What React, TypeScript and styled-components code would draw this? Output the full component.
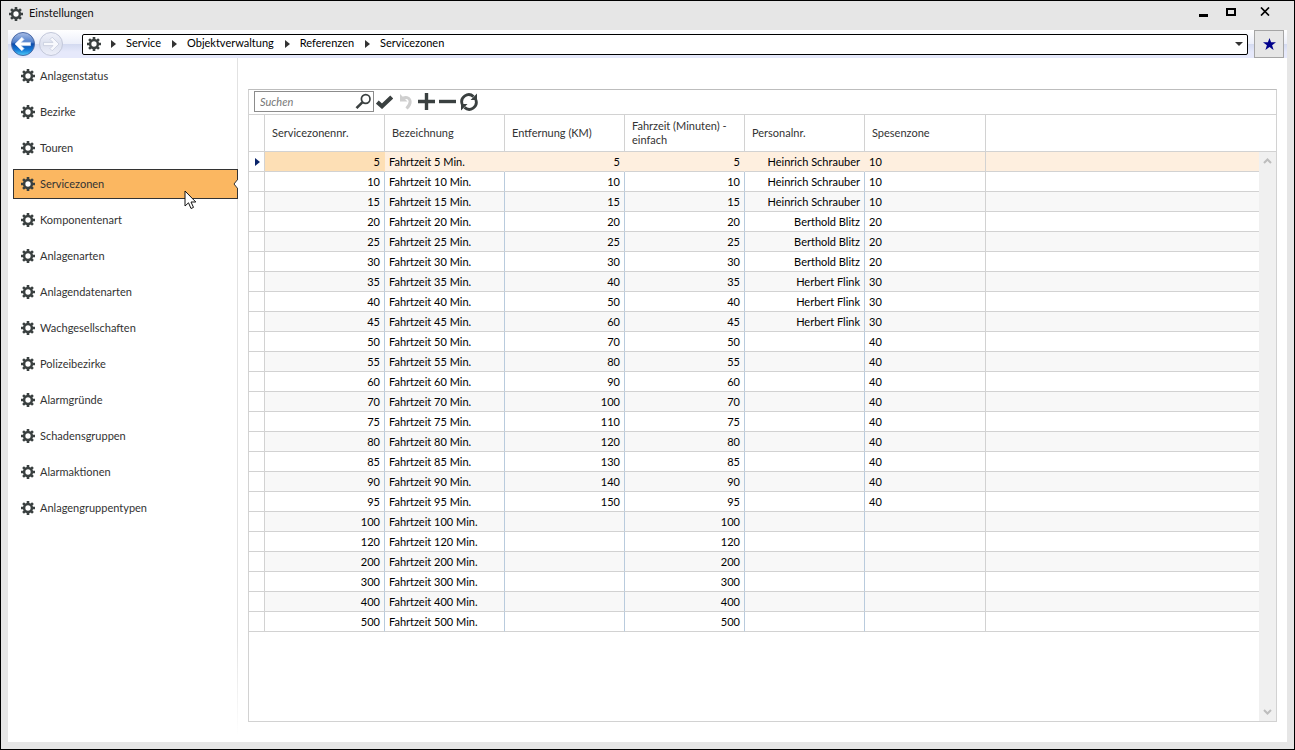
import React from "react";
import styled, { createGlobalStyle, css } from "styled-components";

const Global = createGlobalStyle`
  * { box-sizing: border-box; }
  body { margin: 0; font: 11px/14px Lato, "Open Sans", sans-serif; color: #333; background: #e6e6e6; }
  button, input { font: inherit; color: inherit; }
`;

const Window = styled.div`
  display: flex;
  flex-direction: column;
  min-height: 100vh;
  border: 1px solid #000;
  background: #e6e6e6;
  padding: 0 7px 7px;
`;

const TitleBar = styled.header`
  display: flex;
  align-items: center;
  gap: 6px;
  height: 29px;
  padding: 0 2px 4px 1px;
`;

const Title = styled.h1`
  flex: 1;
  margin: 0;
  padding-bottom: 2px;
  font: inherit;
  color: #111;
`;

const PlainButton = styled.button`
  display: flex;
  align-items: center;
  justify-content: center;
  border: 0;
  padding: 0;
  background: none;
`;

const WindowButton = styled(PlainButton)<{ $wide?: boolean }>`
  width: ${(p) => (p.$wide ? 40 : 28)}px;
  height: 22px;
  padding-bottom: 4px;
`;

const WindowButtons = styled.div`
  display: flex;
`;

const NavBar = styled.nav`
  display: flex;
  align-items: center;
  height: 28px;
  padding-right: 3px;
  background: linear-gradient(#fff 0, #eceffa 14px, #d3daf0 14px, #e6e9fb 22px, #e6e9fb 28px);
`;

const History = styled.div`
  display: flex;
  width: 74px;
  padding-left: 1px;
`;

const AddressBar = styled.div`
  display: flex;
  flex: 1;
  align-items: center;
  height: 21px;
  border: 1px solid #000;
  border-radius: 2px;
  background: #fff;
  padding: 0 4px;
`;

const Crumbs = styled.ol`
  display: flex;
  flex: 1;
  margin: 0;
  padding: 0;
  list-style: none;
`;

const Crumb = styled.li`
  display: flex;
  align-items: center;
`;

const CrumbLink = styled.a`
  color: #000;
  text-decoration: none;
  padding: 0 1px 2px 0;
`;

const CrumbArrow = styled.svg`
  margin: 0 10px;
`;

const StarButton = styled(PlainButton)`
  width: 30px;
  height: 28px;
  margin-left: 6px;
  border: 1px solid #a5a5a5;
  background: #e6e6e6;
`;

const Body = styled.div`
  display: flex;
  flex: 1;
  background: #fff;
`;

const Sidebar = styled.ul`
  flex: none;
  width: 230px;
  margin: 0;
  padding: 3px 0 0 5px;
  list-style: none;
  border-right: 1px solid;
  border-image: linear-gradient(#e2e2e2 85%, #fff 99%) 1;
`;

const SidebarItem = styled.li`
  height: 36px;
`;

const SidebarLink = styled.a<{ $active?: boolean }>`
  position: relative;
  display: flex;
  align-items: center;
  gap: 5px;
  height: 30px;
  padding-left: 7px;
  border: 1px solid transparent;
  color: #333;
  text-decoration: none;
  ${(p) =>
    p.$active &&
    css`
      margin-right: -1px;
      border-color: #333;
      background: #fbb761;
    `}
`;

const Notch = styled.svg`
  position: absolute;
  right: -1px;
  top: 9px;
`;

const Pointer = styled.svg`
  position: absolute;
  left: 170px;
  top: 20px;
`;

const Main = styled.main`
  display: flex;
  flex: 1;
  flex-direction: column;
  min-width: 0;
  margin: 31px 10px 20px;
  border: 1px solid #d2d2d2;
  border-top-color: #bdbdbd;
`;

const Toolbar = styled.div`
  display: flex;
  align-items: center;
  height: 25px;
  padding: 0 0 1px 5px;
  border-bottom: 1px solid #d2d2d2;
`;

const Search = styled.label`
  display: flex;
  align-items: center;
  width: 120px;
  height: 21px;
  border: 1px solid #8c8c8c;
  padding: 0 1px 0 5px;
`;

const SearchInput = styled.input`
  flex: 1;
  min-width: 0;
  border: 0;
  padding: 0;
  outline: 0;
  background: none;
  &::placeholder {
    color: #777;
    font-style: italic;
    opacity: 1;
  }
`;

const ToolButton = styled(PlainButton)`
  width: 21px;
  height: 21px;
`;

const GridArea = styled.div`
  position: relative;
  display: flex;
  flex: 1;
`;

const Grid = styled.table`
  width: 100%;
  align-self: flex-start;
  table-layout: fixed;
  border-collapse: separate;
  border-spacing: 0;
`;

const MarkerCol = styled.col`
  width: 16px;
`;

const DataCol = styled.col<{ $last?: boolean }>`
  width: ${(p) => (p.$last ? 121 : 120)}px;
`;

const HeadCell = styled.th`
  height: 37px;
  padding: 0 7px;
  font-weight: 400;
  text-align: left;
  border-right: 1px solid #d2d2d2;
  border-bottom: 1px solid #d2d2d2;
  &:last-child { border-right: 0; }
`;

const Row = styled.tr<{ $selected?: boolean }>`
  background: #fff;
  &:nth-child(odd) { background: #f8f8f8; }
  ${(p) => p.$selected && css`&&& { background: #feefdf; }`}
`;

const Cell = styled.td<{ $right?: boolean; $line?: string; $fill?: string }>`
  height: 20px;
  padding: 0 4px;
  color: #000;
  white-space: nowrap;
  text-align: ${(p) => (p.$right ? "right" : "left")};
  border-right: 1px solid ${(p) => p.$line ?? "#b9cbdd"};
  border-bottom: 1px solid #d2d2d2;
  background: ${(p) => p.$fill ?? "none"};
  &:last-child { border-right: 0; }
`;

const MarkerCell = styled(Cell)`
  padding: 0 6px;
  background: #fff;
  svg { display: block; }
`;

const ScrollBar = styled.div`
  position: absolute;
  top: 37px;
  right: 0;
  bottom: 0;
  display: flex;
  flex-direction: column;
  justify-content: space-between;
  width: 17px;
  background: #f0f0f0;
`;

const ScrollButton = styled(PlainButton)`
  height: 18px;
`;

const Gear = () => (
  <svg width="14" height="14" viewBox="0 0 14 14" aria-hidden="true">
    <circle cx="7" cy="7" r="3.5" fill="#fff" />
    <g fill="none" stroke="#3a4040">
      {[0, 45, 90, 135].map((a) => (
        <path key={a} d="M7 0V3M7 11V14" strokeWidth="2.6" transform={`rotate(${a} 7 7)`} />
      ))}
      <circle cx="7" cy="7" r="3.9" strokeWidth="2.5" />
    </g>
  </svg>
);

const HistoryArrow = ({ forward }: { forward?: boolean }) => (
  <svg width="28" height="28" viewBox="0 0 28 28" aria-hidden="true">
    <defs>
      <linearGradient id="ball" x1="0" y1="0" x2="0" y2="1">
        <stop offset="0" stopColor="#a9bde6" />
        <stop offset=".42" stopColor="#4f7fcb" />
        <stop offset=".5" stopColor="#0b4bab" />
        <stop offset=".75" stopColor="#1478d6" />
        <stop offset="1" stopColor="#4fd0fa" />
      </linearGradient>
      <linearGradient id="ballOff" x1="0" y1="0" x2="0" y2="1">
        <stop offset="0" stopColor="#f0f2fa" />
        <stop offset=".5" stopColor="#dde1ef" />
        <stop offset="1" stopColor="#eef0fa" />
      </linearGradient>
    </defs>
    <circle cx="14" cy="14" r="11.5" fill={forward ? "url(#ballOff)" : "url(#ball)"} stroke={forward ? "#c3c8da" : "#4a69a6"} />
    <path
      d="M6 14L12.8 7.2L15 9.4L12 12.4H21.5V15.6H12L15 18.6L12.8 20.8Z"
      fill={forward ? "#f8f9fd" : "#fff"}
      stroke={forward ? "#c3c8da" : "#d5e2f7"}
      strokeWidth=".7"
      strokeLinejoin="round"
      transform={forward ? "rotate(180 14 14)" : undefined}
    />
  </svg>
);

const menu = [
  "Anlagenstatus", "Bezirke", "Touren", "Servicezonen", "Komponentenart", "Anlagenarten", "Anlagendatenarten",
  "Wachgesellschaften", "Polizeibezirke", "Alarmgründe", "Schadensgruppen", "Alarmaktionen", "Anlagengruppentypen",
];
const crumbs = ["Service", "Objektverwaltung", "Referenzen", "Servicezonen"];
const headers = ["Servicezonennr.", "Bezeichnung", "Entfernung (KM)", "Fahrzeit (Minuten) - einfach", "Personalnr.", "Spesenzone"];

type Zone = [nr: number, km: number | "", person: string, expense: number | ""];
const zones: Zone[] = [
  [5, 5, "Heinrich Schrauber", 10], [10, 10, "Heinrich Schrauber", 10], [15, 15, "Heinrich Schrauber", 10],
  [20, 20, "Berthold Blitz", 20], [25, 25, "Berthold Blitz", 20], [30, 30, "Berthold Blitz", 20],
  [35, 40, "Herbert Flink", 30], [40, 50, "Herbert Flink", 30], [45, 60, "Herbert Flink", 30],
  [50, 70, "", 40], [55, 80, "", 40], [60, 90, "", 40], [70, 100, "", 40], [75, 110, "", 40],
  [80, 120, "", 40], [85, 130, "", 40], [90, 140, "", 40], [95, 150, "", 40],
  [100, "", "", ""], [120, "", "", ""], [200, "", "", ""], [300, "", "", ""], [400, "", "", ""], [500, "", "", ""],
];

export default function App() {
  return (
    <>
      <Global />
      <Window>
        <TitleBar>
          <Gear />
          <Title>Einstellungen</Title>
          <WindowButtons>
            <WindowButton aria-label="Minimieren">
              <svg width="9" height="10"><path d="M0 8.5H9" stroke="#000" strokeWidth="3" /></svg>
            </WindowButton>
            <WindowButton aria-label="Maximieren">
              <svg width="10" height="8"><path d="M1 1H9V7H1Z" fill="none" stroke="#000" strokeWidth="2" /></svg>
            </WindowButton>
            <WindowButton $wide aria-label="Schließen">
              <svg width="10" height="9"><path d="M1 .5L9 8.5M9 .5L1 8.5" stroke="#000" strokeWidth="1.7" /></svg>
            </WindowButton>
          </WindowButtons>
        </TitleBar>
        <NavBar aria-label="Navigation">
          <History>
            <PlainButton aria-label="Zurück"><HistoryArrow /></PlainButton>
            <PlainButton aria-label="Vorwärts" disabled><HistoryArrow forward /></PlainButton>
          </History>
          <AddressBar>
            <Gear />
            <Crumbs>
              {crumbs.map((c) => (
                <Crumb key={c}>
                  <CrumbArrow width="5" height="8"><path d="M0 0L5 4L0 8Z" fill="#333" /></CrumbArrow>
                  <CrumbLink href="#">{c}</CrumbLink>
                </Crumb>
              ))}
            </Crumbs>
            <PlainButton aria-label="Verlauf">
              <svg width="8" height="4"><path d="M0 0H8L4 4Z" fill="#333" /></svg>
            </PlainButton>
          </AddressBar>
          <StarButton aria-label="Favorit">
            <svg width="13" height="12" viewBox="0 0 13 12">
              <path d="M6.5 0L8.1 4.3H13L9.1 7.3L10.6 12L6.5 9.1L2.4 12L3.9 7.3L0 4.3H4.9Z" fill="#00008b" />
            </svg>
          </StarButton>
        </NavBar>
        <Body>
          <Sidebar>
            {menu.map((m) => {
              const active = m === "Servicezonen";
              return (
                <SidebarItem key={m}>
                  <SidebarLink href="#" $active={active}>
                    <Gear />
                    {m}
                    {active && (
                      <>
                        <Notch width="5" height="10"><path d="M5 0L1 5L5 10" fill="#fff" stroke="#333" /></Notch>
                        <Pointer width="13" height="20" viewBox="0 0 13 20">
                          <path d="M1 1V16L4.5 12.8L7 18.5L9.5 17.4L7 12H11.8Z" fill="#fff" stroke="#111" />
                        </Pointer>
                      </>
                    )}
                  </SidebarLink>
                </SidebarItem>
              );
            })}
          </Sidebar>
          <Main>
            <Toolbar>
              <Search>
                <SearchInput placeholder="Suchen" aria-label="Suchen" />
                <svg width="17" height="17" viewBox="0 0 17 17" fill="none" stroke="#3a4040">
                  <circle cx="10.7" cy="6" r="4.3" strokeWidth="1.7" />
                  <path d="M7.3 9.4L1.5 15.2" strokeWidth="2.6" />
                </svg>
              </Search>
              <ToolButton aria-label="Übernehmen">
                <svg width="17" height="14" viewBox="0 0 17 14"><path d="M1.3 7L6 11.2L15.7 2" fill="none" stroke="#3a4040" strokeWidth="4.2" /></svg>
              </ToolButton>
              <ToolButton aria-label="Rückgängig" disabled>
                <svg width="14" height="17" viewBox="0 0 14 17">
                  <path d="M4 5.2C10 2.5 14.5 8.5 7.5 15.5" fill="none" stroke="#cfcfcf" strokeWidth="3" />
                  <path d="M1 1V8.5H8.5Z" fill="#cfcfcf" />
                </svg>
              </ToolButton>
              <ToolButton aria-label="Hinzufügen">
                <svg width="17" height="17"><path d="M0 8.5H17M8.5 0V17" stroke="#3a4040" strokeWidth="3.4" /></svg>
              </ToolButton>
              <ToolButton aria-label="Entfernen">
                <svg width="17" height="17"><path d="M0 8.5H17" stroke="#3a4040" strokeWidth="3.4" /></svg>
              </ToolButton>
              <ToolButton aria-label="Aktualisieren">
                <svg width="18" height="18" viewBox="0 0 18 18" fill="none" stroke="#3a4040" strokeWidth="2.8">
                  <path d="M2.2 11.2A7 7 0 0 1 13.5 3.6M15.8 6.8A7 7 0 0 1 4.5 14.4" />
                  <path d="M17 .5V7H10.5ZM1 17.5V11H7.5Z" fill="#3a4040" stroke="none" />
                </svg>
              </ToolButton>
            </Toolbar>
            <GridArea>
              <Grid>
                <colgroup>
                  <MarkerCol />
                  {headers.map((h, i) => <DataCol key={h} $last={i === headers.length - 1} />)}
                  <col />
                </colgroup>
                <thead>
                  <tr>
                    <HeadCell />
                    {headers.map((h) => <HeadCell key={h} scope="col">{h}</HeadCell>)}
                    <HeadCell />
                  </tr>
                </thead>
                <tbody>
                  {zones.map(([nr, km, person, expense], i) => {
                    const sel = i === 0;
                    const line = sel ? "transparent" : undefined;
                    return (
                      <Row key={nr} $selected={sel}>
                        <MarkerCell $line="#d2d2d2">
                          {sel && <svg width="5" height="8"><path d="M0 0L5 4L0 8Z" fill="#0a246a" /></svg>}
                        </MarkerCell>
                        <Cell $right $line={line} $fill={sel ? "#fddfb5" : undefined}>{nr}</Cell>
                        <Cell $line={line}>Fahrtzeit {nr} Min.</Cell>
                        <Cell $right $line={line}>{km}</Cell>
                        <Cell $right $line={line}>{nr}</Cell>
                        <Cell $right $line={line}>{person}</Cell>
                        <Cell $line="#d2d2d2">{expense}</Cell>
                        <Cell />
                      </Row>
                    );
                  })}
                </tbody>
              </Grid>
              <ScrollBar>
                <ScrollButton aria-label="Nach oben">
                  <svg width="9" height="6"><path d="M1 5L4.5 1.5L8 5" fill="none" stroke="#bdbdbd" strokeWidth="2" /></svg>
                </ScrollButton>
                <ScrollButton aria-label="Nach unten">
                  <svg width="9" height="6"><path d="M1 1L4.5 4.5L8 1" fill="none" stroke="#bdbdbd" strokeWidth="2" /></svg>
                </ScrollButton>
              </ScrollBar>
            </GridArea>
          </Main>
        </Body>
      </Window>
    </>
  );
}
